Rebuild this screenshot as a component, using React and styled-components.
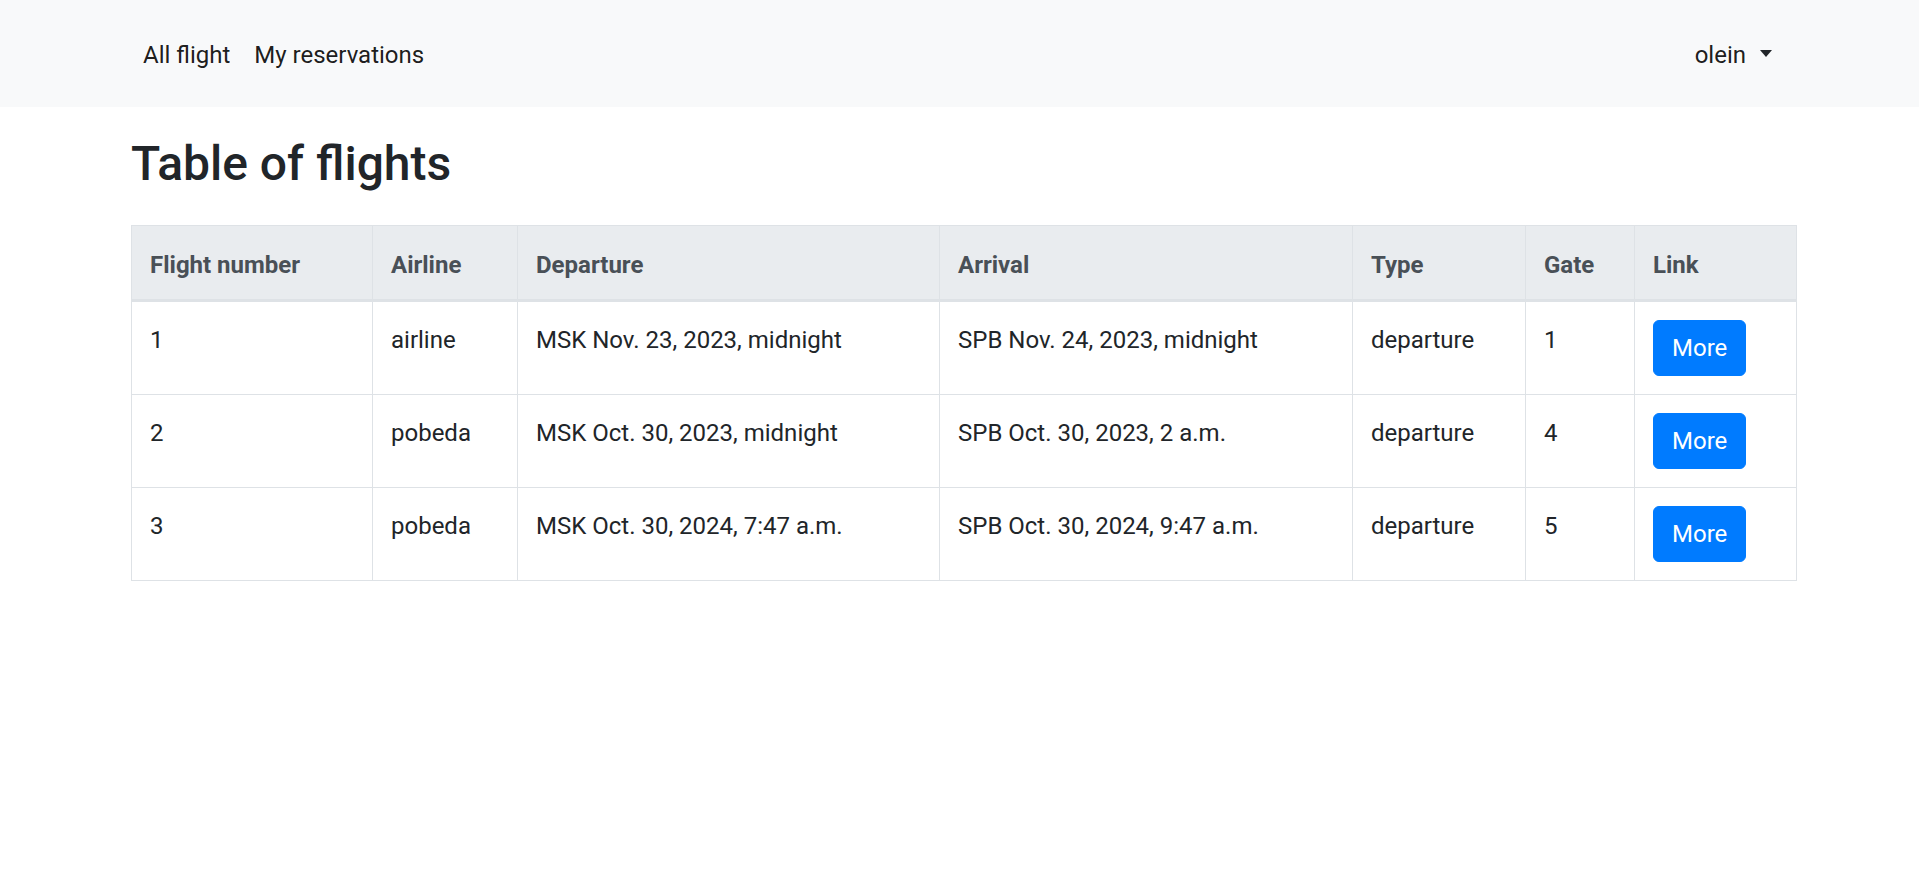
import React from "react";
import styled, { createGlobalStyle } from "styled-components";

const GlobalStyle = createGlobalStyle`
  html, body { margin: 0; padding: 0; background: #ffffff; }
  body {
    font-family: Roboto, "Liberation Sans", Arial, sans-serif;
    color: #212529;
    font-size: 24px;
  }
  * { box-sizing: border-box; }
`;

const Navbar = styled.nav`
  height: 107px;
  padding-top: 3px;
  background: #f8f9fa;
  display: flex;
  align-items: center;
`;

const NavInner = styled.div`
  width: 1665px;
  margin-left: calc(50% - 828.5px);
  display: flex;
  align-items: center;
  justify-content: space-between;
`;

const NavList = styled.div`
  display: flex;
  align-items: center;
`;

const NavLink = styled.a`
  display: block;
  padding: 0 12px;
  line-height: 40px;
  font-size: 24px;
  color: rgba(0, 0, 0, 0.9);
  text-decoration: none;
  cursor: pointer;
`;

const Dropdown = styled.a`
  display: flex;
  align-items: center;
  padding: 0 12px;
  margin-right: 12px;
  line-height: 40px;
  font-size: 24px;
  color: rgba(0, 0, 0, 0.9);
  text-decoration: none;
  cursor: pointer;
`;

const Caret = styled.span`
  display: block;
  width: 0;
  height: 0;
  margin-left: 14px;
  margin-bottom: 3px;
  border-top: 7px solid #212529;
  border-left: 6.5px solid transparent;
  border-right: 6.5px solid transparent;
`;

const Main = styled.main`
  width: 1665px;
  margin-left: calc(50% - 828.5px);
`;

const Title = styled.h2`
  margin: 28px 0 32px;
  font-size: 48px;
  line-height: 57.6px;
  font-weight: 500;
  color: #212529;
`;

const Table = styled.table`
  width: 1665px;
  border-collapse: collapse;
  table-layout: fixed;
  border: 1px solid #dee2e6;
`;

const Th = styled.th`
  width: ${(p) => p.$w}px;
  padding: 19px 18px 14px;
  line-height: 40px;
  font-size: 24px;
  font-weight: 700;
  text-align: left;
  vertical-align: bottom;
  color: #495057;
  background: #e9ecef;
  border: 1px solid #dee2e6;
  border-bottom: 3px solid #dee2e6;
`;

const Td = styled.td`
  padding: 18px;
  line-height: 40px;
  font-size: 24px;
  vertical-align: top;
  color: #212529;
  border: 1px solid #dee2e6;
  white-space: nowrap;
`;

const ButtonCell = styled(Td)`
  line-height: 0;
`;

const MoreButton = styled.button`
  display: inline-block;
  height: 56px;
  padding: 9px 18px;
  font-family: inherit;
  font-size: 24px;
  line-height: 36px;
  color: #ffffff;
  background: #007bff;
  border: 1px solid #007bff;
  border-radius: 6px;
  cursor: pointer;
`;

const columns = [
  { label: "Flight number", w: 241 },
  { label: "Airline", w: 145 },
  { label: "Departure", w: 422 },
  { label: "Arrival", w: 413 },
  { label: "Type", w: 173 },
  { label: "Gate", w: 109 },
  { label: "Link", w: 162 },
];

const flights = [
  {
    id: 1,
    airline: "airline",
    dep: "MSK Nov. 23, 2023, midnight",
    arr: "SPB Nov. 24, 2023, midnight",
    type: "departure",
    gate: 1,
  },
  {
    id: 2,
    airline: "pobeda",
    dep: "MSK Oct. 30, 2023, midnight",
    arr: "SPB Oct. 30, 2023, 2 a.m.",
    type: "departure",
    gate: 4,
  },
  {
    id: 3,
    airline: "pobeda",
    dep: "MSK Oct. 30, 2024, 7:47 a.m.",
    arr: "SPB Oct. 30, 2024, 9:47 a.m.",
    type: "departure",
    gate: 5,
  },
];

export default function App() {
  return (
    <>
      <GlobalStyle />
      <Navbar>
        <NavInner>
          <NavList>
            <NavLink>All flight</NavLink>
            <NavLink>My reservations</NavLink>
          </NavList>
          <Dropdown>
            olein
            <Caret />
          </Dropdown>
        </NavInner>
      </Navbar>
      <Main>
        <Title>Table of flights</Title>
        <Table>
          <thead>
            <tr>
              {columns.map((c) => (
                <Th key={c.label} $w={c.w}>
                  {c.label}
                </Th>
              ))}
            </tr>
          </thead>
          <tbody>
            {flights.map((f) => (
              <tr key={f.id}>
                <Td>{f.id}</Td>
                <Td>{f.airline}</Td>
                <Td>{f.dep}</Td>
                <Td>{f.arr}</Td>
                <Td>{f.type}</Td>
                <Td>{f.gate}</Td>
                <ButtonCell>
                  <MoreButton>More</MoreButton>
                </ButtonCell>
              </tr>
            ))}
          </tbody>
        </Table>
      </Main>
    </>
  );
}
